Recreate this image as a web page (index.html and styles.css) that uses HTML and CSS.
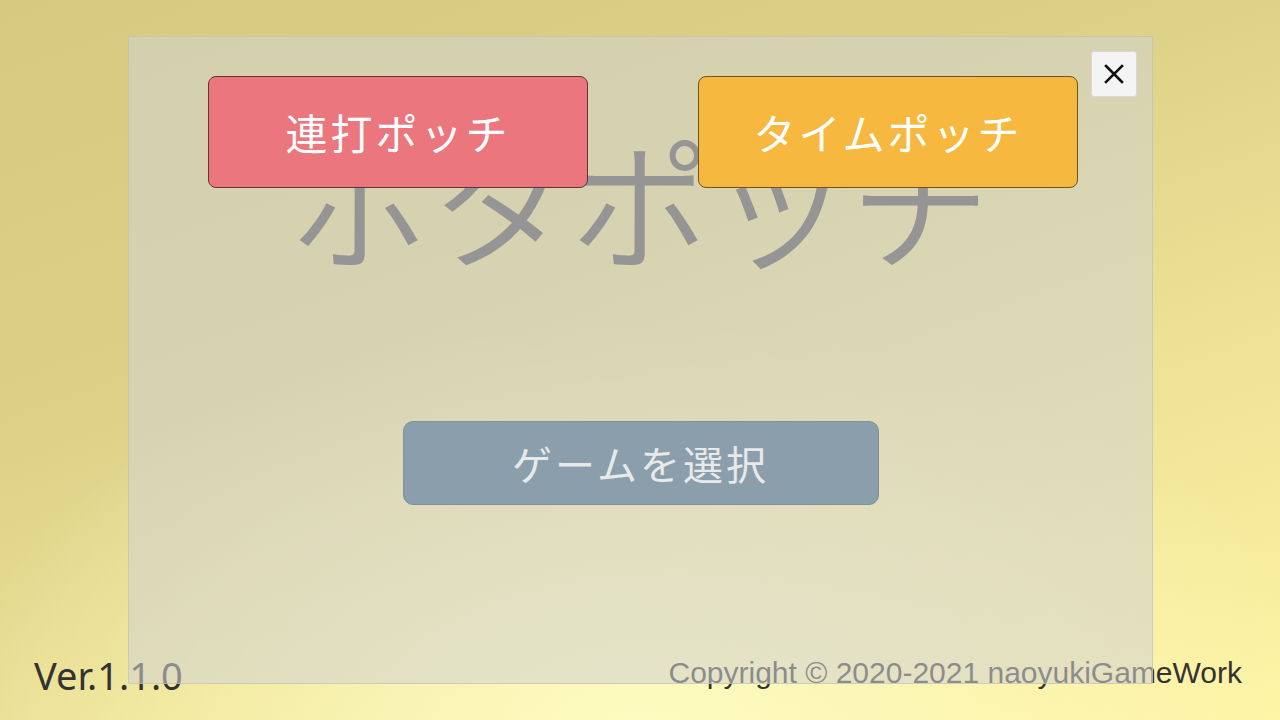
FILE: index.html
```html
<!DOCTYPE html>
<html lang="ja">
<head>
<meta charset="utf-8">
<title>ポタポッチ</title>
<link rel="stylesheet" href="styles.css">
</head>
<body>
<div class="stage">
  <footer class="footer">
    <span class="version">Ver.1.1.0</span>
    <span class="copyright">Copyright © 2020-2021 naoyukiGameWork</span>
  </footer>
  <div class="panel">
    <button class="close" aria-label="閉じる">
      <svg viewBox="0 0 24 24" width="24" height="24"><path d="M4 4L20 20M20 4L4 20" stroke="#111" stroke-width="2.6" stroke-linecap="square" fill="none"/></svg>
    </button>
    <div class="top">
      <h1 class="title">ポタポッチ</h1>
      <div class="modes">
        <button class="mode mode-red">連打ポッチ</button>
        <button class="mode mode-orange">タイムポッチ</button>
      </div>
    </div>
    <div class="select-row">
      <button class="select">ゲームを選択</button>
    </div>
  </div>
</div>
</body>
</html>
```

FILE: styles.css
```css
* { box-sizing: border-box; }
html, body { margin: 0; padding: 0; }
body { font-family: "Noto Sans CJK JP", "Noto Sans", sans-serif; }

.stage {
  position: relative;
  width: 1280px;
  height: 720px;
  overflow: hidden;
  display: flex;
  flex-direction: column;
  justify-content: flex-end;
  background:
    radial-gradient(ellipse 700px 420px at 640px 740px, rgba(255,253,196,0.95), rgba(255,250,180,0) 100%),
    linear-gradient(160deg, #d6ca80 0%, #dbd086 35%, #efe497 70%, #fff4a4 100%);
}

.footer {
  display: flex;
  justify-content: space-between;
  align-items: flex-end;
  padding: 0 38px 0 34px;
  color: #333333;
}
.version {
  font-family: "Noto Sans", sans-serif;
  font-size: 38px;
  line-height: 1;
  margin-bottom: 26px;
}
.copyright {
  font-family: "Liberation Sans", Arial, sans-serif;
  font-size: 30px;
  line-height: 1;
  margin-bottom: 32px;
}

.panel {
  position: absolute;
  left: 128px;
  top: 36px;
  width: 1025px;
  height: 648px;
  background: rgba(211, 210, 208, 0.56);
  border: 1px solid rgba(190, 190, 175, 0.6);
  border-radius: 2px;
  padding-top: 39px;
}

.close {
  position: absolute;
  top: 14px;
  right: 15px;
  width: 46px;
  height: 46px;
  padding: 0;
  background: #f4f4f4;
  border: 1px solid #d8d8d8;
  border-radius: 3px;
  display: flex;
  align-items: center;
  justify-content: center;
}

.top {
  display: grid;
  grid-template-areas: "stack";
  height: 234px;
}
.title, .modes { grid-area: stack; }

.title {
  margin: 52px 0 0 0;
  text-align: center;
  font-family: "Noto Sans CJK JP", sans-serif;
  font-weight: 350;
  font-size: 140px;
  line-height: 1;
  color: #959595;
  height: 140px;
}

.modes {
  display: flex;
  gap: 110px;
  padding-left: 79px;
  align-items: flex-start;
  z-index: 1;
}
.mode {
  width: 380px;
  height: 112px;
  border-radius: 8px;
  font-family: "Noto Sans CJK JP", sans-serif;
  font-weight: 400;
  font-size: 42px;
  letter-spacing: 3px;
  color: #ffffff;
  padding: 0;
  line-height: 1;
}
.mode-red {
  background: #ec767d;
  border: 1px solid #5e3434;
}
.mode-orange {
  background: #f6b83f;
  border: 1px solid #6e5324;
}

.select-row {
  display: flex;
  justify-content: center;
  margin-top: 111px;
}
.select {
  width: 476px;
  height: 84px;
  border-radius: 10px;
  background: #8a9eab;
  border: 1px solid #7f929c;
  color: #e9e9e9;
  font-family: "Noto Sans CJK JP", sans-serif;
  font-size: 40px;
  letter-spacing: 3px;
  line-height: 1;
  padding: 0;
}
```
